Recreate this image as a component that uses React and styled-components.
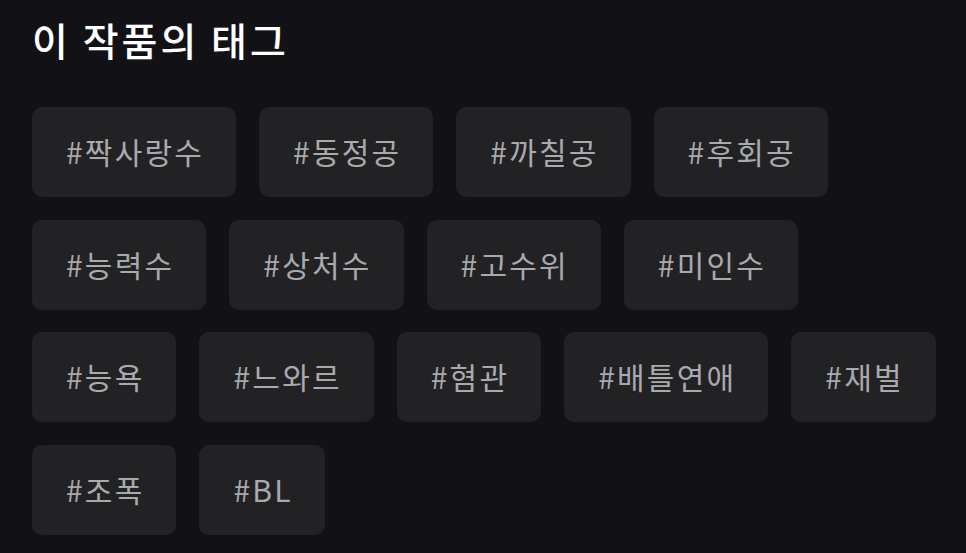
import React from 'react'
import styled, { createGlobalStyle } from 'styled-components';

const GlobalStyle = createGlobalStyle`
  html, body {
    margin: 0;
    padding: 0;
    background-color: #121116;
  }
  body {
    font-family: "Noto Sans CJK KR", "Noto Sans", sans-serif;
  }
`;

const TagSection = styled.section`
  width: 966px;
  height: 553px;
  box-sizing: border-box;
  padding: 16px 0 0 32px;
  background-color: #121116;
  overflow: hidden;
`;

const SectionHeading = styled.h2`
  margin: 0;
  font-size: 39px;
  line-height: 46px;
  font-weight: 500;
  color: #fff;
  letter-spacing: 3px;
`;

const TagList = styled.ul`
  list-style: none;
  margin: 45px 0 0;
  padding: 0;
  display: flex;
  flex-wrap: wrap;
  column-gap: 23px;
  row-gap: 22.5px;
  max-width: 920px;
`;

const TagChip = styled.li`
  height: 90px;
  box-sizing: border-box;
  padding: 0 32px 2px 34px;
  display: flex;
  align-items: center;
  border-radius: 10px;
  background-color: #222225;
  color: #a9a9ae;
  font-size: 30px;
  line-height: 1;
  letter-spacing: 2.2px;
`;

const tags = [
  '짝사랑수', '동정공', '까칠공', '후회공',
  '능력수', '상처수', '고수위', '미인수',
  '능욕', '느와르', '혐관', '배틀연애', '재벌',
  '조폭', 'BL',
];

const App = () => {
  return (
    <>
      <GlobalStyle />
      <TagSection>
        <SectionHeading>이 작품의 태그</SectionHeading>
        <TagList>
          {tags.map((t) => (
            <TagChip key={t}>#{t}</TagChip>
          ))}
        </TagList>
      </TagSection>
    </>
  )
}

export default App
